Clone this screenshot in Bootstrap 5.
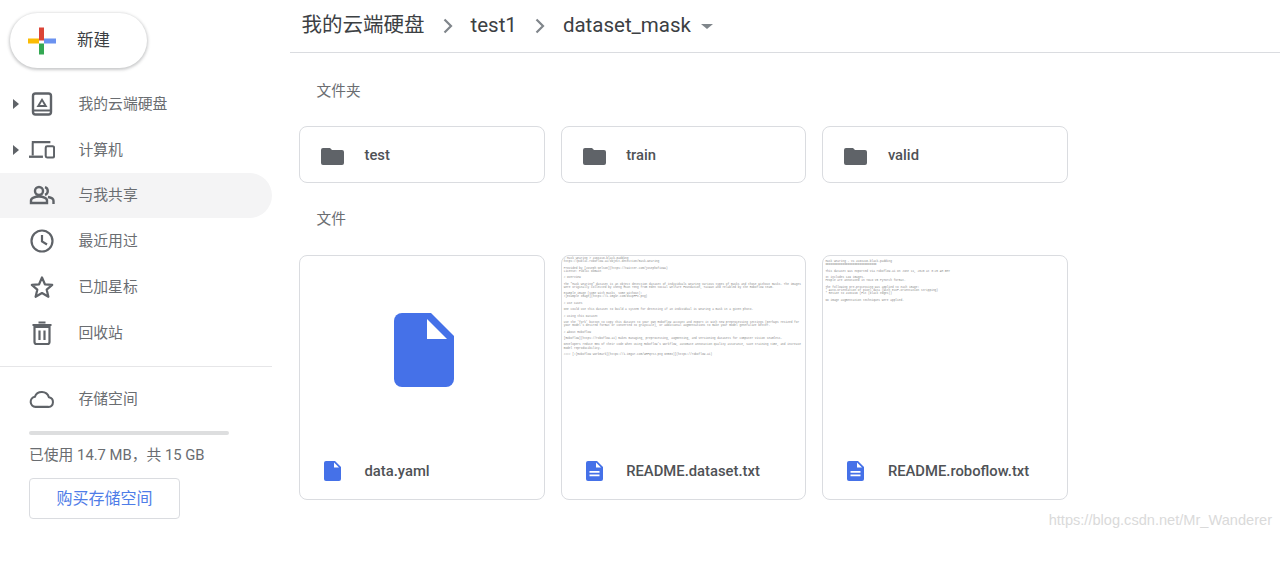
<!doctype html>
<html lang="zh">
<head>
<meta charset="utf-8">
<title>Drive</title>
<link href="https://cdn.jsdelivr.net/npm/bootstrap@5.3.0/dist/css/bootstrap.min.css" rel="stylesheet">
<style>
html,body{height:564px;overflow:hidden;background:#fff}
body{font-family:Roboto,"Noto Sans CJK SC",sans-serif;color:#5f6368;position:relative}
.side-col{width:272px;flex:none;height:564px}
.new-wrap{padding:13px 0 0 10px;height:81px}
.new-btn{width:137px;height:55px;border-radius:28px;background:#fff;box-shadow:0 1px 3px 1px rgba(60,64,67,.28);color:#3c4043;font-size:16.5px;padding-left:17px;gap:20px}
.new-btn span{padding-top:2px}
.nav-line{height:45.800px;font-size:14.8px;color:#6a6d71;position:relative;padding-left:29px}
.nav-line.on{background:#f4f4f5;border-radius:0 23px 23px 0}
.nav-ico{width:26px;height:26px;flex:none;margin-right:23.500px;color:#5f6368}
.arrow{position:absolute;left:13px;top:18px;width:0;height:0;border-left:6px solid #5f6368;border-top:5px solid transparent;border-bottom:5px solid transparent}
.side-rule{border-top:1px solid #e6e6e8;margin-top:10px;height:10px}
.store{padding-left:29px;font-size:14.8px;color:#6a6d71}
.store-head{height:46px}
.bar-track{width:200px;height:4px;background:#dddedf;border-radius:2px;margin-top:9px}
.used{font-size:14.8px;margin-top:10px;line-height:20px}
.buy{display:block;width:151px;height:41px;margin-top:13px;line-height:39px;text-align:center;border:1px solid #dadce0;border-radius:4px;color:#4f7de8;font-size:16px;background:#fff;padding:0}
.main-col{flex:1;min-width:0;margin-left:18px}
.crumbs{height:53px;border-bottom:1px solid #dadce0;padding-left:11.500px;font-size:20.500px;color:#3c4043;padding-bottom:2px}
.crumbs .sep{width:46px;text-align:center;flex:none}
.crumbs .cur{margin-right:10px}
.tri{width:0;height:0;border-top:5px solid #80868b;border-left:6px solid transparent;border-right:6px solid transparent;margin-top:2px}
.sect{font-size:14.700px;color:#6a6d71;padding-left:26.500px;line-height:20px}
.sect1{margin-top:28px}
.sect2{margin-top:26px}
.tile-row{display:flex;gap:16px;padding-left:9px}
.tile{width:245.700px;border:1px solid #dadce0;border-radius:8px;background:#fff;flex:none}
.f-tile{height:57px;margin-top:25px;font-size:14.800px;color:#4f5256;font-weight:500;padding:2px 0 0 20px;gap:20.500px}
.files{margin-top:26px}
.d-tile{height:245px;overflow:hidden;display:flex;flex-direction:column}
.thumb{height:195px;flex:none;overflow:hidden}
.doc{font-family:"Liberation Mono",monospace;font-size:2.850px;line-height:3.200px;color:#8a8a8a;white-space:pre-wrap;margin:0;padding:1px 1px 0 2px;overflow:hidden;height:100%}
.big{display:flex;justify-content:center;padding:57px 0 0 4px}
.name{height:49px;font-size:14.800px;font-weight:500;color:#4f5256;padding-left:24px;gap:23.500px;padding-bottom:8px}
.mark-csdn{position:absolute;right:8px;top:511px;font-family:"Liberation Sans",sans-serif;font-size:14.600px;color:#dadada;line-height:18px}
</style>
</head>
<body>
<div class="d-flex">
  <aside class="side-col">
    <div class="new-wrap">
      <div class="new-btn d-flex align-items-center">
        <svg width="30" height="30" viewBox="0 0 30 30"><rect x="12" y="1.500" width="5" height="13" fill="#db4437"/><rect x="17" y="12.500" width="12" height="5" fill="#6b92f0"/><rect x="12" y="17.500" width="5" height="11" fill="#34a853"/><rect x="1" y="12.500" width="11" height="5" fill="#fbbc04"/></svg>
        <span>新建</span>
      </div>
    </div>
    <div class="nav-rows">
      <div class="nav-line d-flex align-items-center"><i class="arrow"></i>
        <svg class="nav-ico" viewBox="0 0 26 26"><rect x="4" y="2.500" width="18" height="21" rx="2.500" fill="none" stroke="currentColor" stroke-width="2.400"/><path d="M4 19.500h18" stroke="currentColor" stroke-width="2"/><path d="M13 7l5.500 9h-11z" fill="currentColor"/><path d="M13 10.500l2 3.500h-4z" fill="#fff"/></svg>
        <span>我的云端硬盘</span></div>
      <div class="nav-line d-flex align-items-center"><i class="arrow"></i>
        <svg class="nav-ico" viewBox="0 0 28 26"><path d="M4 5.500V19M3 4.500h20" fill="none" stroke="currentColor" stroke-width="2.200"/><path d="M0 19h15v2.500H0z" fill="currentColor"/><rect x="18" y="9" width="9" height="12" rx="1.500" fill="none" stroke="currentColor" stroke-width="2.200"/></svg>
        <span>计算机</span></div>
      <div class="nav-line on d-flex align-items-center">
        <svg class="nav-ico" viewBox="0 0 26 26"><circle cx="10" cy="9" r="4" fill="none" stroke="currentColor" stroke-width="2.400"/><path d="M2 21v-2.500c0-2.500 4-4 8-4s8 1.500 8 4V21z" fill="none" stroke="currentColor" stroke-width="2.400"/><path d="M16 5.200a4 4 0 0 1 0 7.600M19 15c3 .6 5.500 1.900 5.500 3.700V22" fill="none" stroke="currentColor" stroke-width="2.400"/></svg>
        <span>与我共享</span></div>
      <div class="nav-line d-flex align-items-center">
        <svg class="nav-ico" viewBox="0 0 26 26"><circle cx="13" cy="13" r="10.500" fill="none" stroke="currentColor" stroke-width="2.200"/><path d="M13 7v6.500l5 3" fill="none" stroke="currentColor" stroke-width="2.200"/></svg>
        <span>最近用过</span></div>
      <div class="nav-line d-flex align-items-center">
        <svg class="nav-ico" viewBox="0 0 26 26"><path d="M13 3.500l2.900 6.800 7.300.6-5.500 4.800 1.700 7.100-6.400-3.800-6.400 3.800 1.700-7.100-5.500-4.800 7.300-.6z" fill="none" stroke="currentColor" stroke-width="2.200" stroke-linejoin="round"/></svg>
        <span>已加星标</span></div>
      <div class="nav-line d-flex align-items-center">
        <svg class="nav-ico" viewBox="0 0 26 26"><path d="M5.500 7h15v15a2 2 0 0 1-2 2h-11a2 2 0 0 1-2-2z" fill="none" stroke="currentColor" stroke-width="2.200"/><path d="M3.500 5h19M9.500 2.500h7M10.500 10.500v9.500M15.500 10.500v9.500" fill="none" stroke="currentColor" stroke-width="2.200"/></svg>
        <span>回收站</span></div>
    </div>
    <div class="side-rule"></div>
    <div class="store">
      <div class="store-head d-flex align-items-center">
        <svg class="nav-ico" viewBox="0 0 28 20"><path d="M7 18.500a5.500 5.500 0 0 1-.7-10.900A8 8 0 0 1 21.400 8a5.300 5.300 0 0 1-.4 10.500z" fill="none" stroke="currentColor" stroke-width="2.200"/></svg>
        <span>存储空间</span>
      </div>
      <div class="bar-track"></div>
      <div class="used">已使用 14.7 MB，共 15 GB</div>
      <a class="buy text-decoration-none">购买存储空间</a>
    </div>
  </aside>
  <main class="main-col">
    <div class="crumbs d-flex align-items-center">
      <span>我的云端硬盘</span>
      <span class="sep"><svg width="10" height="16" viewBox="0 0 10 16"><path d="M1.500 1.500L8 8l-6.500 6.500" fill="none" stroke="#80868b" stroke-width="2.200"/></svg></span>
      <span>test1</span>
      <span class="sep"><svg width="10" height="16" viewBox="0 0 10 16"><path d="M1.500 1.500L8 8l-6.500 6.500" fill="none" stroke="#80868b" stroke-width="2.200"/></svg></span>
      <span class="cur">dataset_mask</span>
      <i class="tri"></i>
    </div>
    <div class="sect sect1">文件夹</div>
    <div class="tile-row">
      <div class="tile f-tile d-flex align-items-center"><svg width="24" height="24" viewBox="0 0 24 24"><path d="M10 4H3a2 2 0 0 0-2 2v13a2 2 0 0 0 2 2h19a2 2 0 0 0 2-2V8a2 2 0 0 0-2-2H12z" fill="#5f6368"/></svg><span>test</span></div>
      <div class="tile f-tile d-flex align-items-center"><svg width="24" height="24" viewBox="0 0 24 24"><path d="M10 4H3a2 2 0 0 0-2 2v13a2 2 0 0 0 2 2h19a2 2 0 0 0 2-2V8a2 2 0 0 0-2-2H12z" fill="#5f6368"/></svg><span>train</span></div>
      <div class="tile f-tile d-flex align-items-center"><svg width="24" height="24" viewBox="0 0 24 24"><path d="M10 4H3a2 2 0 0 0-2 2v13a2 2 0 0 0 2 2h19a2 2 0 0 0 2-2V8a2 2 0 0 0-2-2H12z" fill="#5f6368"/></svg><span>valid</span></div>
    </div>
    <div class="sect sect2">文件</div>
    <div class="tile-row files">
      <div class="tile d-tile">
        <div class="thumb big"><svg width="60" height="74" viewBox="0 0 60 74"><path d="M8 0h29l23 23v43a8 8 0 0 1-8 8H8a8 8 0 0 1-8-8V8a8 8 0 0 1 8-8z" fill="#4571e8"/><path d="M33 6v20h20z" fill="#fff"/></svg></div>
        <div class="name d-flex align-items-center"><svg width="17" height="20" viewBox="0 0 17 20"><path d="M2 0h9l6 6v12a2 2 0 0 1-2 2H2a2 2 0 0 1-2-2V2a2 2 0 0 1 2-2z" fill="#4571e8"/><path d="M10 1.500v5h5z" fill="#fff"/></svg><span>data.yaml</span></div>
      </div>
      <div class="tile d-tile">
        <div class="thumb"><pre class="doc"># Mask Wearing > 416x416-black-padding
https://public.roboflow.ai/object-detection/mask-wearing

Provided by [Joseph Nelson](https://twitter.com/josephofiowa)
License: Public Domain

# Overview

The "Mask Wearing" dataset is an object detection dataset of individuals wearing various types of masks and those without masks. The images
were originally collected by Cheng Hsun Teng from Eden Social Welfare Foundation, Taiwan and relabled by the Roboflow team.

Example image (some with masks, some without):
![Example Image](https://i.imgur.com/dsCpFFI.png)

# Use Cases

One could use this dataset to build a system for detecting if an individual is wearing a mask in a given photo.

# Using this Dataset

Use the 'fork' button to copy this dataset to your own Roboflow account and export it with new preprocessing settings (perhaps resized for
your model's desired format or converted to grayscale), or additional augmentations to make your model generalize better.

# About Roboflow

[Roboflow](https://roboflow.ai) makes managing, preprocessing, augmenting, and versioning datasets for computer vision seamless.

Developers reduce 50% of their code when using Roboflow's workflow, automate annotation quality assurance, save training time, and increase
model reproducibility.

#### [![Roboflow Workmark](https://i.imgur.com/WHFqYSJ.png =350x)](https://roboflow.ai)</pre></div>
        <div class="name d-flex align-items-center"><svg width="17" height="20" viewBox="0 0 17 20"><path d="M2 0h9l6 6v12a2 2 0 0 1-2 2H2a2 2 0 0 1-2-2V2a2 2 0 0 1 2-2z" fill="#4571e8"/><path d="M10 1.500v5h5zM3.500 10h10v1.700h-10zM3.500 13.500h10v1.700h-10z" fill="#fff"/></svg><span>README.dataset.txt</span></div>
      </div>
      <div class="tile d-tile">
        <div class="thumb"><pre class="doc">

Mask Wearing - v1 416x416-black-padding
==============================

This dataset was exported via roboflow.ai on June 11, 2020 at 3:25 AM GMT

It includes 149 images.
People are annotated in YOLO v5 PyTorch format.

The following pre-processing was applied to each image:
* Auto-orientation of pixel data (with EXIF-orientation stripping)
* Resize to 416x416 (Fit (black edges))

No image augmentation techniques were applied.</pre></div>
        <div class="name d-flex align-items-center"><svg width="17" height="20" viewBox="0 0 17 20"><path d="M2 0h9l6 6v12a2 2 0 0 1-2 2H2a2 2 0 0 1-2-2V2a2 2 0 0 1 2-2z" fill="#4571e8"/><path d="M10 1.500v5h5zM3.500 10h10v1.700h-10zM3.500 13.500h10v1.700h-10z" fill="#fff"/></svg><span>README.roboflow.txt</span></div>
      </div>
    </div>
  </main>
</div>
<div class="mark-csdn">https://blog.csdn.net/Mr_Wanderer</div>
<script src="https://cdn.jsdelivr.net/npm/bootstrap@5.3.0/dist/js/bootstrap.bundle.min.js"></script>
</body>
</html>
